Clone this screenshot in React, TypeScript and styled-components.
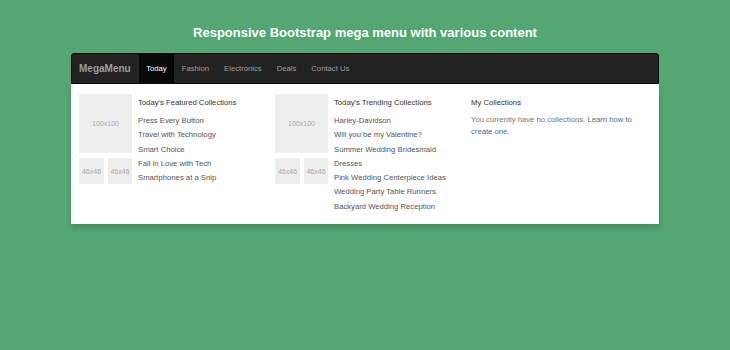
import styled, { createGlobalStyle } from 'styled-components';

const GlobalStyle = createGlobalStyle`
  html, body {
    margin: 0;
    padding: 0;
    background-color: #54a672;
    font-family: 'Liberation Sans', Arial, sans-serif;
  }
`;

const featured = ['Press Every Button', 'Travel with Technology', 'Smart Choice', 'Fall in Love with Tech', 'Smartphones at a Snip'];

const trending = [
  'Harley-Davidson',
  'Will you be my Valentine?',
  'Summer Wedding Bridesmaid Dresses',
  'Pink Wedding Centerpiece Ideas',
  'Wedding Party Table Runners',
  'Backyard Wedding Reception',
];

const navItems = ['Today', 'Fashion', 'Electronics', 'Deals', 'Contact Us'];

function Collection({ title, links }: { title: string; links: string[] }) {
  return (
    <Column>
      <Media>
        <Thumbs>
          <Placeholder $w={53} $h={59}>100x100</Placeholder>
          <SmallRow>
            <Placeholder $w={25} $h={26}>46x46</Placeholder>
            <Placeholder $w={24} $h={26}>46x46</Placeholder>
          </SmallRow>
        </Thumbs>
        <LinkList>
          <Heading>{title}</Heading>
          {links.map((l) => (
            <LinkItem key={l}>{l}</LinkItem>
          ))}
        </LinkList>
      </Media>
    </Column>
  );
}

export default function App() {
  return (
    <>
      <GlobalStyle />
      <Page>
        <Title>Responsive Bootstrap mega menu with various content</Title>
        <Container>
          <Navbar>
            <Brand>MegaMenu</Brand>
            <NavList>
              {navItems.map((item, i) => (
                <NavItem key={item} $active={i === 0}>
                  {item}
                </NavItem>
              ))}
            </NavList>
          </Navbar>
          <Panel>
            <Collection title="Today's Featured Collections" links={featured} />
            <Collection title="Today's Trending Collections" links={trending} />
            <Column>
              <Heading>My Collections</Heading>
              <Para>
                You currently have no collections. <Link>Learn how to create one.</Link>
              </Para>
            </Column>
          </Panel>
        </Container>
      </Page>
    </>
  );
}

const Page = styled.div`
  width: 730px;
  height: 350px;
  padding-top: 24px;
  box-sizing: border-box;
`;

const Title = styled.h1`
  margin: 0 0 12px;
  text-align: center;
  color: #fff;
  font-size: 13px;
  line-height: 17px;
  font-weight: bold;
`;

const Container = styled.div`
  width: 588px;
  margin: 0 auto;
`;

const Navbar = styled.div`
  display: flex;
  align-items: stretch;
  height: 29px;
  background-color: #222;
  border: 1px solid #0b0b0b;
  border-radius: 3px 3px 0 0;
  padding-left: 7px;
`;

const Brand = styled.div`
  display: flex;
  align-items: center;
  color: #9d9d9d;
  font-size: 10px;
  font-weight: bold;
  margin-right: 8px;
`;

const NavList = styled.div`
  display: flex;
`;

const NavItem = styled.div<{ $active?: boolean }>`
  display: flex;
  align-items: center;
  padding: 0 7.5px;
  font-size: 7.7px;
  color: ${(p) => (p.$active ? '#fff' : '#9d9d9d')};
  background-color: ${(p) => (p.$active ? '#080808' : 'transparent')};
`;

const Panel = styled.div`
  display: flex;
  background-color: #fff;
  padding: 10px 0;
  box-shadow: 0 3px 6px rgba(0, 0, 0, 0.18);
`;

const Column = styled.div`
  flex: 1;
  padding: 0 8px;
  min-width: 0;
`;

const Media = styled.div`
  display: flex;
  gap: 6px;
`;

const Thumbs = styled.div`
  display: flex;
  flex-direction: column;
  gap: 5px;
`;

const SmallRow = styled.div`
  display: flex;
  gap: 4px;
`;

const Placeholder = styled.div<{ $w: number; $h: number }>`
  width: ${(p) => p.$w}px;
  height: ${(p) => p.$h}px;
  background-color: #eee;
  color: #aaa;
  font-size: 7px;
  display: flex;
  align-items: center;
  justify-content: center;
`;

const LinkList = styled.div`
  display: flex;
  flex-direction: column;
`;

const Heading = styled.div`
  margin-top: 2px;
  margin-bottom: 4px;
  color: #333;
  font-size: 7.7px;
  line-height: 14px;
`;

const LinkItem = styled.div`
  color: #555;
  font-size: 7.7px;
  line-height: 14.3px;
`;

const Para = styled.p`
  margin: 1px 0 0;
  color: #777;
  font-size: 7.7px;
  line-height: 12px;
  padding-right: 10px;
`;

const Link = styled.span`
  color: #3f6fa8;
`;
